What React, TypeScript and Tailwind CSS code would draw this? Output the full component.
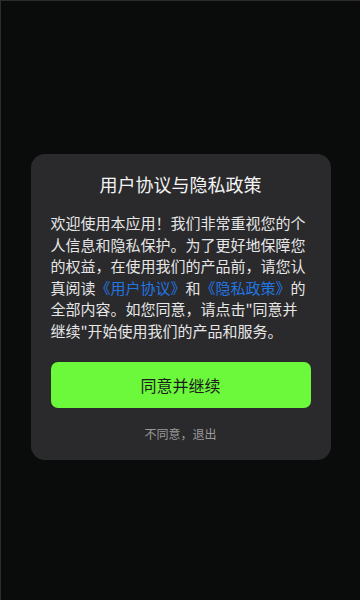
export default function App() {
  return (
    <div
      className="flex h-[600px] w-[360px] flex-col items-center border-l border-t border-[#2c2c2c] bg-[#0a0c0c] pt-[153px]"
      style={{ fontFamily: '"Noto Sans CJK SC", "Noto Sans", sans-serif' }}
    >
      <div className="w-[300px] rounded-[14px] bg-[#2a2a2c] px-5 pb-[17px] pt-[17px]">
        <h1 className="text-center text-[18px] leading-[26px] font-normal text-[#f4f4f4]">用户协议与隐私政策</h1>
        <p className="mt-[15px] text-[15px] leading-[21.5px] text-[#e6e6e6]">
          欢迎使用本应用！我们非常重视您的个人信息和隐私保护。为了更好地保障您的权益，在使用我们的产品前，请您认真阅读
          <span className="text-[#2375e2]">《用户协议》</span>和
          <span className="text-[#2375e2]">《隐私政策》</span>
          的全部内容。如您同意，请点击"同意并继续"开始使用我们的产品和服务。
        </p>
        <button className="mt-[21px] flex h-[46px] w-full items-center justify-center rounded-[7px] bg-[#6cf83b] text-[16px] text-[#1c1c1c]">
          同意并继续
        </button>
        <p className="mt-[17px] text-center text-[12px] leading-[18px] text-[#9a9a9a]">不同意，退出</p>
      </div>
    </div>
  )
}
